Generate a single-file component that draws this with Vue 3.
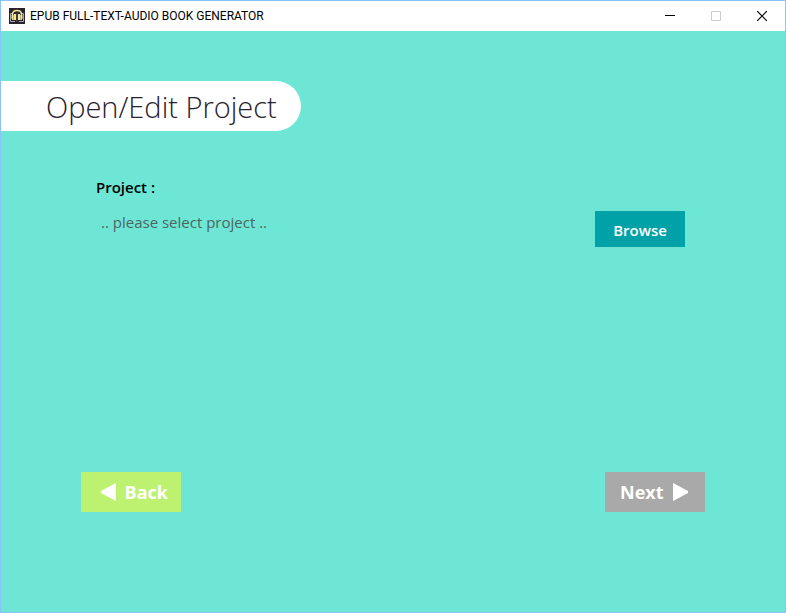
<script setup>
import { ref } from 'vue'

const project = ref('.. please select project ..')
</script>

<template>
  <div class="window">
    <header class="titlebar">
      <svg class="app-icon" viewBox="0 0 16 16" aria-hidden="true">
        <rect width="16" height="16" fill="#28222e" />
        <path d="M3 5.500H1.500V13.500H6M13 5.500H14.500V13.500H10" fill="none" stroke="#aaa6a4" />
        <path d="M3.500 8V6Q4 2.500 8 2.500T12.500 6V8" fill="none" stroke="#eee596" stroke-width="1.500" />
        <path d="M3 7H4V12H3.500L2.500 10.500V8ZM5 6H7V12H5ZM13 7H12V12H12.500L13.500 10.500V8ZM11 6H9V12H11Z" fill="#f3eb9b" />
        <path d="M4.500 7V12M11.500 7V12" stroke="#b0a978" />
        <path d="M8 5V14" stroke="#55504a" />
      </svg>
      <span class="app-name">EPUB FULL-TEXT-AUDIO BOOK GENERATOR</span>
      <div class="controls">
        <button type="button" aria-label="Minimize">
          <svg viewBox="0 0 10 10"><path d="M0 4.500H10" stroke="#000" /></svg>
        </button>
        <button type="button" aria-label="Maximize" disabled>
          <svg viewBox="0 0 10 10"><path d="M.5.5H9.500V9.500H.5Z" fill="none" stroke="#ccc" /></svg>
        </button>
        <button type="button" aria-label="Close">
          <svg viewBox="0 0 10 10"><path d="M0 0L10 10M10 0L0 10" stroke="#000" stroke-width="1.200" /></svg>
        </button>
      </div>
    </header>
    <main>
      <h1>Open/Edit Project</h1>
      <section class="picker">
        <div class="field">
          <label for="project">Project :</label>
          <input id="project" v-model="project" type="text" readonly />
        </div>
        <button type="button" class="browse">Browse</button>
      </section>
      <nav>
        <button type="button" class="step back">
          <svg viewBox="0 0 16 20"><path d="M15 1V19L0 11V9Z" fill="#fff" /></svg>
          <span>Back</span>
        </button>
        <button type="button" class="step next" disabled>
          <span>Next</span>
          <svg viewBox="0 0 16 20"><path d="M1 1V19L16 11V9Z" fill="#fff" /></svg>
        </button>
      </nav>
    </main>
  </div>
</template>

<style>
body {
  margin: 0;
}
</style>

<style scoped>
.window {
  box-sizing: border-box;
  display: flex;
  flex-direction: column;
  min-height: 100vh;
  border: 1px solid #8ac3f9;
  background: #6ee6d5;
  font-family: "Open Sans", "Noto Sans", sans-serif;
}
button {
  border: 0;
  padding: 0;
  font-family: inherit;
}
.titlebar {
  display: flex;
  align-items: center;
  height: 30px;
  padding-left: 8px;
  background: #fff;
}
.app-icon {
  width: 16px;
  height: 16px;
  margin-right: 5px;
}
.app-name {
  font-family: Roboto, "Open Sans", sans-serif;
  font-size: 12px;
  line-height: 16px;
  color: #000;
}
.controls {
  display: flex;
  align-self: stretch;
  margin-left: auto;
}
.controls button {
  display: flex;
  align-items: center;
  justify-content: center;
  width: 46px;
  background: none;
}
.controls svg {
  width: 10px;
  height: 10px;
}
main {
  display: flex;
  flex: 1;
  flex-direction: column;
  align-items: stretch;
  padding: 50px 0 100px;
}
h1 {
  box-sizing: border-box;
  align-self: flex-start;
  width: 300px;
  height: 50px;
  margin: 0;
  padding-left: 45px;
  border-radius: 0 25px 25px 0;
  background: #fff;
  color: #28222e;
  font-size: 29px;
  font-weight: 300;
  line-height: 52px;
  white-space: nowrap;
}
.picker {
  display: flex;
  align-items: flex-end;
  gap: 20px;
  padding: 44px 100px 0 95px;
}
.field {
  display: flex;
  flex: 1;
  flex-direction: column;
  gap: 10px;
  padding-bottom: 12px;
}
label {
  color: #000;
  font-size: 15px;
  font-weight: 600;
  line-height: 24px;
}
input {
  padding: 0 5px;
  border: 0;
  background: none;
  color: #4b6662;
  font-family: inherit;
  font-size: 15px;
  line-height: 26px;
}
.browse {
  width: 90px;
  height: 36px;
  background: #00a2a8;
  color: #fff;
  font-size: 15px;
  font-weight: 600;
  line-height: 38px;
}
nav {
  display: flex;
  justify-content: space-between;
  margin-top: auto;
  padding: 0 80px;
}
.step {
  display: flex;
  align-items: center;
  gap: 8px;
  width: 100px;
  height: 40px;
  color: #fff;
  font-size: 18px;
  font-weight: 700;
  line-height: 42px;
}
.step svg {
  width: 16px;
  height: 20px;
}
.back {
  justify-content: flex-end;
  padding-right: 13px;
  background: #bdf271;
}
.next {
  padding-left: 15px;
  background: #a9a9a9;
}
</style>
